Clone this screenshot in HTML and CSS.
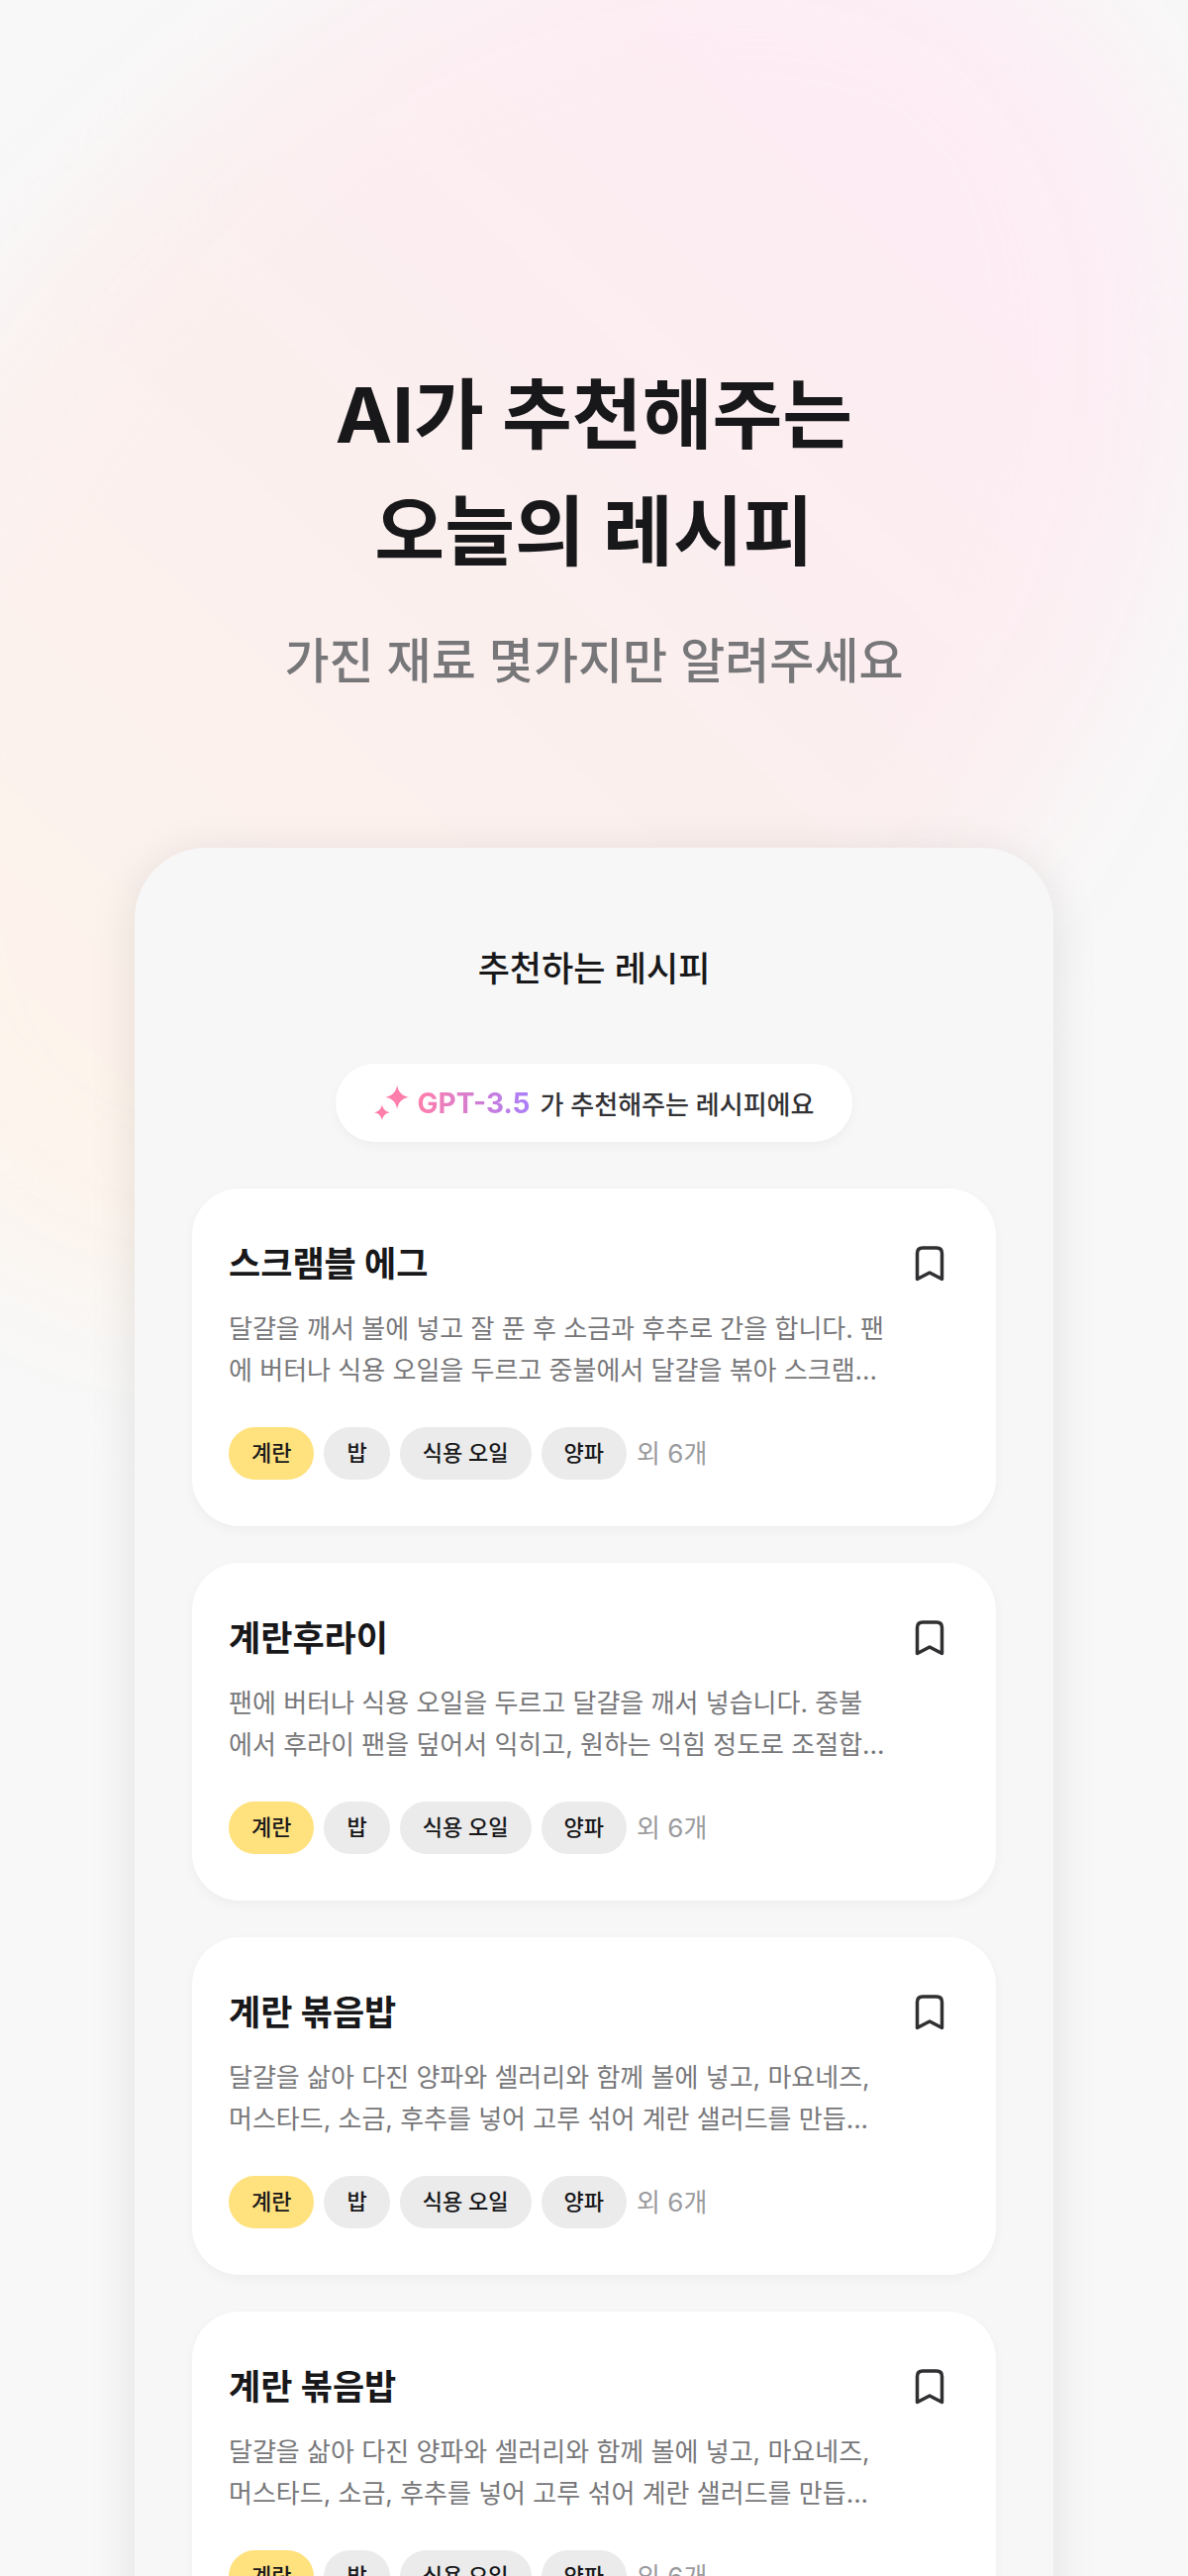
FILE: index.html
```html
<!DOCTYPE html>
<html lang="ko">
<head>
    <meta charset="UTF-8">
    <meta name="viewport" content="width=device-width, initial-scale=1.0">
    <title>AI가 추천해주는 오늘의 레시피</title>
    <link rel="stylesheet" href="styles.css">
</head>
<body>
    <div class="page">
        <div class="glow"></div>

        <header class="hero">
            <h1>AI가 추천해주는<br>오늘의 레시피</h1>
            <p>가진 재료 몇가지만 알려주세요</p>
        </header>

        <main class="panel">
            <h2 class="panel-title">추천하는 레시피</h2>

            <div class="gpt-badge">
                <svg class="sparkle" viewBox="0 0 34 34" fill="#ff7eab">
                    <path d="M22.500 0C23.800 6.500 27 10 34 11.500C27 13 23.800 16.500 22.500 23C21.200 16.500 18 13 11 11.500C18 10 21.200 6.500 22.500 0Z"/>
                    <path d="M7.700 19C8.700 23 10.700 25.500 15.400 26.500C10.700 27.500 8.700 30 7.700 34C6.700 30 4.700 27.500 0 26.500C4.700 25.500 6.700 23 7.700 19Z"/>
                </svg>
                <span class="gpt-name">GPT-3.5</span>
                <span>가 추천해주는 레시피에요</span>
            </div>

            <!-- 레시피 목록 -->
            <article class="card">
                <div class="card-head">
                    <h3>스크램블 에그</h3>
                    <button class="bookmark" aria-label="저장">
                        <svg viewBox="0 0 30 36"><path d="M2.500 33.500V7.500Q2.500 2 8 2H22Q27.500 2 27.500 7.500V33.500L15 27Z"/></svg>
                    </button>
                </div>
                <p class="desc">달걀을 깨서 볼에 넣고 잘 푼 후 소금과 후추로 간을 합니다. 팬<br>에 버터나 식용 오일을 두르고 중불에서 달걀을 볶아 스크램...</p>
                <div class="tags">
                    <span class="tag have">계란</span>
                    <span class="tag">밥</span>
                    <span class="tag">식용 오일</span>
                    <span class="tag">양파</span>
                    <span class="more">외 6개</span>
                </div>
            </article>

            <article class="card">
                <div class="card-head">
                    <h3>계란후라이</h3>
                    <button class="bookmark" aria-label="저장">
                        <svg viewBox="0 0 30 36"><path d="M2.500 33.500V7.500Q2.500 2 8 2H22Q27.500 2 27.500 7.500V33.500L15 27Z"/></svg>
                    </button>
                </div>
                <p class="desc">팬에 버터나 식용 오일을 두르고 달걀을 깨서 넣습니다. 중불<br>에서 후라이 팬을 덮어서 익히고, 원하는 익힘 정도로 조절합...</p>
                <div class="tags">
                    <span class="tag have">계란</span>
                    <span class="tag">밥</span>
                    <span class="tag">식용 오일</span>
                    <span class="tag">양파</span>
                    <span class="more">외 6개</span>
                </div>
            </article>

            <article class="card">
                <div class="card-head">
                    <h3>계란 볶음밥</h3>
                    <button class="bookmark" aria-label="저장">
                        <svg viewBox="0 0 30 36"><path d="M2.500 33.500V7.500Q2.500 2 8 2H22Q27.500 2 27.500 7.500V33.500L15 27Z"/></svg>
                    </button>
                </div>
                <p class="desc">달걀을 삶아 다진 양파와 셀러리와 함께 볼에 넣고, 마요네즈,<br>머스타드, 소금, 후추를 넣어 고루 섞어 계란 샐러드를 만듭...</p>
                <div class="tags">
                    <span class="tag have">계란</span>
                    <span class="tag">밥</span>
                    <span class="tag">식용 오일</span>
                    <span class="tag">양파</span>
                    <span class="more">외 6개</span>
                </div>
            </article>

            <article class="card">
                <div class="card-head">
                    <h3>계란 볶음밥</h3>
                    <button class="bookmark" aria-label="저장">
                        <svg viewBox="0 0 30 36"><path d="M2.500 33.500V7.500Q2.500 2 8 2H22Q27.500 2 27.500 7.500V33.500L15 27Z"/></svg>
                    </button>
                </div>
                <p class="desc">달걀을 삶아 다진 양파와 셀러리와 함께 볼에 넣고, 마요네즈,<br>머스타드, 소금, 후추를 넣어 고루 섞어 계란 샐러드를 만듭...</p>
                <div class="tags">
                    <span class="tag have">계란</span>
                    <span class="tag">밥</span>
                    <span class="tag">식용 오일</span>
                    <span class="tag">양파</span>
                    <span class="more">외 6개</span>
                </div>
            </article>
        </main>
    </div>
</body>
</html>
```
FILE: styles.css
```css
* {
    box-sizing: border-box;
    margin: 0;
    padding: 0;
}

body {
    font-family: Inter, 'Noto Sans CJK KR', sans-serif;
    background-color: #f8f8f8;
    color: #18181a;
}

.page {
    position: relative;
    z-index: 0;
    height: 100vh;
    overflow: hidden;
}

/* 배경 그라데이션 */
.glow {
    position: absolute;
    z-index: -1;
    top: 50px;
    left: -320px;
    width: 1640px;
    height: 1120px;
    border-radius: 50%;
    background: linear-gradient(90deg, #fdf4ec 10%, #fbefee 50%, #fdecf4 90%);
    transform: rotate(-48deg);
    filter: blur(70px);
}

.hero {
    padding: 360px 24px 152px;
    text-align: center;
}

.hero h1 {
    font-size: 77px;
    line-height: 118px;
    font-weight: 700;
}

.hero p {
    margin-top: 36px;
    font-size: 49px;
    line-height: 72px;
    font-weight: 500;
    color: #77777a;
}

.panel {
    display: flex;
    flex-direction: column;
    align-items: center;
    max-width: 928px;
    margin: 0 auto;
    padding: 96px 58px 58px;
    border-radius: 72px 72px 0 0;
    background-color: #f7f7f7;
    box-shadow: 0 8px 48px rgba(0, 0, 0, 0.1);
}

.panel-title {
    font-size: 35px;
    line-height: 52px;
    font-weight: 500;
}

.gpt-badge {
    display: flex;
    align-items: center;
    height: 79px;
    margin: 70px 0 47px;
    padding: 0 39px;
    border-radius: 40px;
    background-color: #fff;
    box-shadow: 0 4px 12px rgba(0, 0, 0, 0.04);
    font-size: 26px;
    font-weight: 500;
    color: #333336;
}

.sparkle {
    width: 35px;
    height: 35px;
    margin-right: 9px;
}

.gpt-name {
    margin-right: 10px;
    font-size: 28px;
    font-weight: 700;
    background: linear-gradient(90deg, #ff7eab, #a97ef8);
    -webkit-background-clip: text;
    background-clip: text;
    color: transparent;
}

.card {
    width: 100%;
    margin-bottom: 37px;
    padding: 50px 37px 47px;
    border-radius: 48px;
    background-color: #fff;
    box-shadow: 0 4px 12px rgba(0, 0, 0, 0.04);
}

.card-head {
    display: flex;
    justify-content: space-between;
    align-items: center;
    height: 52px;
    padding-right: 15px;
}

.card h3 {
    font-size: 35px;
    line-height: 52px;
    font-weight: 700;
}

.bookmark {
    width: 30px;
    height: 36px;
    background: none;
    border: none;
    cursor: pointer;
}

.bookmark svg {
    display: block;
    fill: none;
    stroke: #303033;
    stroke-width: 3.5;
    stroke-linejoin: round;
}

.desc {
    margin: 19px 0 36px;
    font-size: 26px;
    line-height: 42px;
    color: #77777a;
    white-space: nowrap;
}

.tags {
    display: flex;
    align-items: center;
    gap: 10px;
}

.tag {
    padding: 0 23px;
    border-radius: 27px;
    background-color: #ebebeb;
    font-size: 22px;
    line-height: 53px;
    font-weight: 500;
}

.tag.have {
    background-color: #ffe17d;
}

.more {
    font-size: 26px;
    line-height: 42px;
    color: #9b9b9e;
}
```
